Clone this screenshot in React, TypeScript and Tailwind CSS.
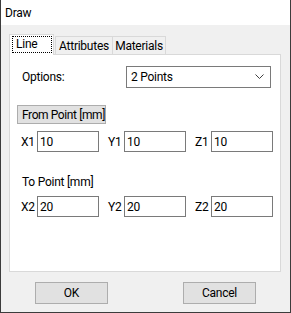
import { ReactNode } from "react";

const font = "font-['Roboto','Liberation_Sans',Arial,sans-serif]";

function CoordField({ label, value }: { label: string; value: string }) {
  return (
    <div className="flex items-center w-[78px]">
      <span className="w-[16px] shrink-0">{label}</span>
      <div className="w-[62px] h-[21px] border border-[#7a7a7a] bg-white pl-[2px] flex items-center">
        {value}
      </div>
    </div>
  );
}

function CoordRow({ values }: { values: [string, string][] }) {
  return (
    <div className="flex gap-[9px] pl-[11px]">
      {values.map(([l, v]) => (
        <CoordField key={l} label={l} value={v} />
      ))}
    </div>
  );
}

function Tab({
  children,
  active,
  className,
}: {
  children: ReactNode;
  active?: boolean;
  className?: string;
}) {
  if (active) {
    return (
      <div className="relative z-10 -mb-px h-[21px] w-[45px] border border-b-0 border-[#d9d9d9] bg-white flex items-start pt-[1px] pl-[2px]">
        <span className="border border-dotted border-black px-[3px] h-[17px] leading-[15px] w-[40px]">
          {children}
        </span>
      </div>
    );
  }
  return (
    <div
      className={
        "h-[18px] border border-b-0 border-[#d9d9d9] bg-[#f0f0f0] flex items-center justify-center leading-[16px] " +
        (className ?? "")
      }
    >
      {children}
    </div>
  );
}

function DialogButton({ children }: { children: ReactNode }) {
  return (
    <div className="w-[73px] h-[22px] border border-[#adadad] bg-[#e1e1e1] flex items-center justify-center">
      {children}
    </div>
  );
}

export default function App() {
  return (
    <div
      className={
        "w-[291px] h-[313px] bg-[#f0f0f0] border-x border-b border-[#3c3c3c] flex flex-col text-[12px] text-black whitespace-nowrap tracking-[-0.25px] " +
        font
      }
    >
      <div className="h-[25px] bg-white pl-[4px] flex items-center shrink-0">Draw</div>

      <div className="pl-[8px] pt-[9px]">
        <div className="flex items-end">
          <Tab active>Line</Tab>
          <Tab className="w-[58px] ml-px">Attributes</Tab>
          <Tab className="w-[53px] border-l-0">Materials</Tab>
        </div>

        <div className="w-[272px] h-[218px] border border-[#d9d9d9] bg-white flex flex-col">
          <div className="flex items-center mt-[11px] h-[22px]">
            <span className="pl-[12px] w-[116px]">Options:</span>
            <div className="w-[145px] h-[22px] border border-[#7a7a7a] bg-white flex items-center justify-between pl-[4px] pr-[6px]">
              <span>2 Points</span>
              <svg width="9" height="6" viewBox="0 0 9 6">
                <polyline points="0.5,0.5 4.5,4.5 8.5,0.5" fill="none" stroke="#404040" strokeWidth="1" />
              </svg>
            </div>
          </div>

          <div className="mt-[17px] ml-[7px] w-[89px] h-[19px] border border-[#adadad] bg-[#e1e1e1] flex items-center pl-[4px] tracking-[-0.4px]">
            From Point [mm]
          </div>

          <div className="mt-[7px]">
            <CoordRow values={[["X1", "10"], ["Y1", "10"], ["Z1", "10"]]} />
          </div>

          <div className="mt-[22px] pl-[12px] h-[16px] flex items-center">To Point [mm]</div>

          <div className="mt-[6px]">
            <CoordRow values={[["X2", "20"], ["Y2", "20"], ["Z2", "20"]]} />
          </div>
        </div>
      </div>

      <div className="flex pl-[34px] gap-[75px] mt-[10px]">
        <DialogButton>OK</DialogButton>
        <DialogButton>Cancel</DialogButton>
      </div>
    </div>
  );
}
